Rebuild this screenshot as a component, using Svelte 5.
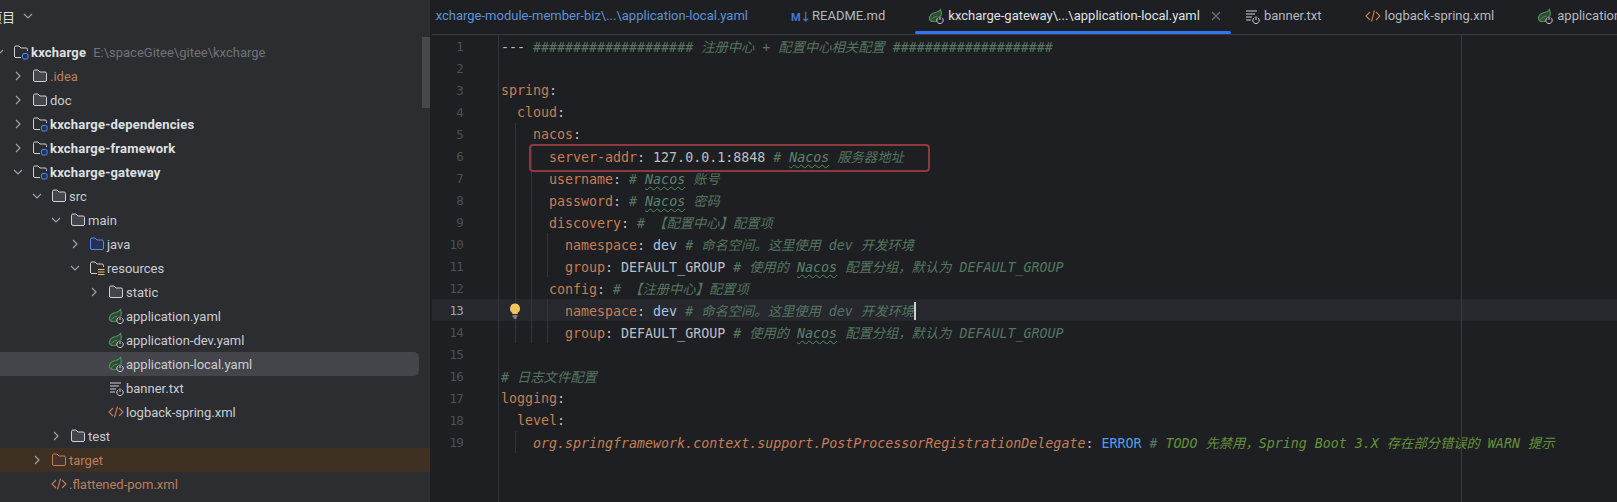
<script lang="ts">
	const tree = [
		{ d: 0, chev: 'down', icon: 'module', name: 'kxcharge', bold: true, path: 'E:\\spaceGitee\\gitee\\kxcharge' },
		{ d: 1, chev: 'right', icon: 'folder', name: '.idea', cls: 'orange' },
		{ d: 1, chev: 'right', icon: 'folder', name: 'doc' },
		{ d: 1, chev: 'right', icon: 'module', name: 'kxcharge-dependencies', bold: true },
		{ d: 1, chev: 'right', icon: 'module', name: 'kxcharge-framework', bold: true },
		{ d: 1, chev: 'down', icon: 'module', name: 'kxcharge-gateway', bold: true },
		{ d: 2, chev: 'down', icon: 'folder', name: 'src' },
		{ d: 3, chev: 'down', icon: 'folder', name: 'main' },
		{ d: 4, chev: 'right', icon: 'java', name: 'java' },
		{ d: 4, chev: 'down', icon: 'resources', name: 'resources' },
		{ d: 5, chev: 'right', icon: 'folder', name: 'static' },
		{ d: 5, icon: 'spring', name: 'application.yaml' },
		{ d: 5, icon: 'spring', name: 'application-dev.yaml' },
		{ d: 5, icon: 'spring', name: 'application-local.yaml', selected: true },
		{ d: 5, icon: 'banner', name: 'banner.txt' },
		{ d: 5, icon: 'xml', name: 'logback-spring.xml' },
		{ d: 3, chev: 'right', icon: 'folder', name: 'test' },
		{ d: 2, chev: 'right', icon: 'target', name: 'target', cls: 'orange', excluded: true },
		{ d: 2, icon: 'xml', name: '.flattened-pom.xml', cls: 'orange' }
	];

	const tabs = [
		{ name: 'kxcharge-module-member-biz\\...\\application-local.yaml', cls: 'clipped changed' },
		{ name: 'README.md', icon: 'md' },
		{ name: 'kxcharge-gateway\\...\\application-local.yaml', icon: 'spring', active: true },
		{ name: 'banner.txt', icon: 'banner' },
		{ name: 'logback-spring.xml', icon: 'xml' },
		{ name: 'application.yaml', icon: 'spring' }
	];

	// [class, text] tokens, one array per line
	const nacos = ['w', 'Nacos'];
	const lines = [
		[['v', '--- '], ['c', '#################### 注册中心 + 配置中心相关配置 ####################']],
		[],
		[['k', 'spring'], ['v', ':']],
		[['k', '  cloud'], ['v', ':']],
		[['k', '    nacos'], ['v', ':']],
		[['k', '      server-addr'], ['v', ': 127.0.0.1:8848 '], ['c', '# '], nacos, ['c', ' 服务器地址']],
		[['k', '      username'], ['v', ': '], ['c', '# '], nacos, ['c', ' 账号']],
		[['k', '      password'], ['v', ': '], ['c', '# '], nacos, ['c', ' 密码']],
		[['k', '      discovery'], ['v', ': '], ['c', '# 【配置中心】配置项']],
		[['k', '        namespace'], ['v', ': '], ['b', 'dev '], ['c', '# 命名空间。这里使用 dev 开发环境']],
		[['k', '        group'], ['v', ': DEFAULT_GROUP '], ['c', '# 使用的 '], nacos, ['c', ' 配置分组\uFF0C默认为 DEFAULT_GROUP']],
		[['k', '      config'], ['v', ': '], ['c', '# 【注册中心】配置项']],
		[['k', '        namespace'], ['v', ': '], ['b', 'dev '], ['c', '# 命名空间。这里使用 dev 开发环境'], ['caret', '']],
		[['k', '        group'], ['v', ': DEFAULT_GROUP '], ['c', '# 使用的 '], nacos, ['c', ' 配置分组\uFF0C默认为 DEFAULT_GROUP']],
		[],
		[['c', '# 日志文件配置']],
		[['k', 'logging'], ['v', ':']],
		[['k', '  level'], ['v', ':']],
		[['ki', '    org.springframework.context.support.PostProcessorRegistrationDelegate'], ['v', ': '], ['e', 'ERROR '], ['c', '# '], ['t', 'TODO 先禁用\uFF0CSpring Boot 3.X 存在部分错误的 WARN 提示']]
	];

	// indent guides: column, first line, last line (0-based)
	const guides = [
		[1, 4, 13],
		[2, 5, 13],
		[3, 9, 10],
		[3, 12, 13],
		[1, 18, 18]
	];
</script>

{#snippet power()}
	<path d="M10.200 9.700a3.200 3.200 0 1 0 3.600 0" fill="none" stroke="#ced0d6" stroke-width="1" />
	<path d="M12 8.400v3.600" stroke="#ced0d6" stroke-width="1" fill="none" />
{/snippet}

{#snippet icon(name)}
	<svg class="icon" width="16" height="16" viewBox="0 0 16 16" aria-hidden="true">
		{#if name === 'folder' || name === 'java' || name === 'target'}
			<path
				d="M1.500 3.500a1.500 1.500 0 0 1 1.500-1.500h3l2 2h5a1.500 1.500 0 0 1 1.500 1.500v6.500a1.500 1.500 0 0 1-1.500 1.500h-10a1.500 1.500 0 0 1-1.500-1.500z"
				fill={name === 'java' ? '#25324d' : name === 'target' ? '#45322b' : '#43454a'}
				stroke={name === 'java' ? '#548af7' : name === 'target' ? '#c77d55' : '#ced0d6'}
			/>
		{:else if name === 'module' || name === 'resources'}
			<path
				d="M8 13.500h-5a1.500 1.500 0 0 1-1.500-1.500v-8.500a1.500 1.500 0 0 1 1.500-1.500h3l2 2h5a1.500 1.500 0 0 1 1.500 1.500v1.500"
				fill="none"
				stroke="#ced0d6"
			/>
			{#if name === 'module'}
				<rect x="9.500" y="9.500" width="5.500" height="5.500" rx="1.500" fill="#25324d" stroke="#548af7" />
			{:else}
				<path d="M9 9.500h6.500M9 12h6.500M9 14.500h6.500" stroke="#f2c55c" stroke-width="1.200" />
			{/if}
		{:else if name === 'spring'}
			<path
				d="M8.500 13.500h-3.500c-2 0-3-1-3.500-2.500-.5-3.500 2.500-6 6-6.500 2-.3 3.800-1.200 5-3 .8 2 1 4 .5 6.500"
				fill="#2f4a35"
				stroke="#4f8f5a"
				stroke-width="1.200"
			/>
			<path d="M3.500 11.500c1.500-2 3.500-3 6-3.500" fill="none" stroke="#4f8f5a" stroke-width="1" />
			{@render power()}
		{:else if name === 'banner'}
			<path d="M2 3h11M2 6h9M2 9h6M2 12h5" stroke="#ced0d6" fill="none" />
			{@render power()}
		{:else if name === 'xml'}
			<path d="M5 4l-4 4 4 4M11 4l4 4-4 4M9.500 2.500l-3 11" fill="none" stroke="#c77d55" stroke-width="1.100" />
		{/if}
	</svg>
{/snippet}

{#snippet chevron(dir)}
	<svg class="chev" width="12" height="12" viewBox="0 0 12 12" aria-hidden="true">
		<path d={dir === 'down' ? 'M2 4l4 4 4-4' : 'M4 2l4 4-4 4'} fill="none" stroke="#9da0a8" stroke-width="1.200" />
	</svg>
{/snippet}

<div class="ide">
	<aside class="project">
		<header class="project-head">
			<span class="project-title">项目</span>
			{@render chevron('down')}
		</header>
		<div class="tree">
			{#each tree as row}
				<div class="row" class:selected={row.selected} class:excluded={row.excluded}>
					<div class="row-inner" style="margin-left: {19 * row.d - 7}px">
						<span class="chev-slot">
							{#if row.chev}{@render chevron(row.chev)}{/if}
						</span>
						{@render icon(row.icon)}
						<span class="label {row.cls ?? ''}" class:bold={row.bold}>{row.name}</span>
						{#if row.path}<span class="path">{row.path}</span>{/if}
					</div>
				</div>
			{/each}
		</div>
		<div class="scrollbar"></div>
	</aside>

	<main class="editor">
		<nav class="tabs">
			{#each tabs as tab}
				<div class="tab {tab.cls ?? ''}" class:active={tab.active}>
					{#if tab.icon === 'md'}
						<span class="md-icon">M↓</span>
					{:else if tab.icon}
						{@render icon(tab.icon)}
					{/if}
					<span class="tab-name">{tab.name}</span>
					{#if tab.active}
						<svg class="close" width="12" height="12" viewBox="0 0 12 12" aria-hidden="true">
							<path d="M2 2l8 8M10 2l-8 8" stroke="#6f737a" stroke-width="1.100" />
						</svg>
					{/if}
				</div>
			{/each}
		</nav>

		<div class="code-area">
			<div class="gutter-line"></div>
			<div class="margin-line"></div>
			{#each lines as line, i}
				<div class="line" class:current={i === 12}>
					<span class="num">{i + 1}</span>
					<span class="bulb-slot"></span>
					<code class="text">{#each line as [cls, str]}{#if cls === 'caret'}<span class="caret"></span>{:else}<span class={cls}>{str}</span>{/if}{/each}</code>
				</div>
			{/each}
			{#each guides as [col, from, to]}
				<div
					class="guide"
					style="left: {col * 16 + 67}px; top: {from * 22}px; height: {(to - from + 1) * 22}px"
				></div>
			{/each}
			<svg class="bulb" width="16" height="16" viewBox="0 0 16 16" aria-hidden="true">
				<path d="M8 .5a5 5 0 0 0-3 9l.5 1.500h5l.5-1.500a5 5 0 0 0-3-9z" fill="#f2c55c" />
				<path d="M5.500 13h5M6.500 15h3" stroke="#ced0d6" stroke-width="1" />
			</svg>
			<div class="highlight"></div>
		</div>
	</main>
</div>

<style>
	:global(body) {
		margin: 0;
		background: #1e1f22;
	}

	.ide {
		display: flex;
		width: 1617px;
		height: 502px;
		overflow: hidden;
		font-family: Roboto, "Noto Sans CJK SC", sans-serif;
		font-size: 13px;
	}

	.project {
		position: relative;
		flex: 0 0 430px;
		background: #2b2d30;
		color: #c9ccd3;
		overflow: hidden;
	}

	.project-head {
		display: flex;
		align-items: center;
		gap: 7px;
		height: 32px;
		margin-left: -11px;
		padding-bottom: 8px;
		color: #dfe1e5;
	}

	.row {
		height: 24px;
		display: flex;
		align-items: center;
		white-space: nowrap;
	}

	.row-inner {
		display: flex;
		align-items: center;
	}

	.row.selected {
		width: 419px;
		background: #43454a;
		border-radius: 0 5px 5px 0;
	}

	.row.excluded {
		background: #3f3024;
	}

	.chev-slot {
		flex: 0 0 12px;
		height: 12px;
		margin-right: 8px;
	}

	.chev {
		display: block;
	}

	.icon {
		flex: none;
	}

	.label {
		margin-left: 2px;
	}

	.bold {
		font-weight: 700;
		letter-spacing: 0.2px;
		color: #dfe1e5;
	}

	.orange {
		color: #bd7e59;
	}

	.path {
		margin-left: 7px;
		color: #6f737a;
	}

	.scrollbar {
		position: absolute;
		top: 37px;
		right: 0;
		width: 8px;
		height: 71px;
		background: #46484c;
	}

	.editor {
		flex: 1;
		min-width: 0;
		margin-left: 2px;
		background: #1e1f22;
	}

	.tabs {
		display: flex;
		height: 34px;
		border-bottom: 1px solid #393b40;
		overflow: hidden;
		color: #b4b8bf;
	}

	.tab {
		position: relative;
		flex: none;
		display: flex;
		align-items: center;
		gap: 4px;
		padding: 0 30px 3px 13px;
		white-space: nowrap;
	}

	.tab.clipped {
		width: 343px;
		margin-left: 3px;
		box-sizing: border-box;
		justify-content: flex-end;
		padding-left: 0;
		overflow: hidden;
	}

	.tab.changed {
		color: #5b93d6;
	}

	.tab.active {
		color: #dfe1e5;
		padding-right: 9px;
	}

	.tab.active::after {
		content: "";
		position: absolute;
		left: 0;
		right: 0;
		bottom: 0;
		height: 3px;
		border-radius: 2px;
		background: #3574f0;
	}

	.close {
		margin-left: 6px;
	}

	.md-icon {
		width: 17px;
		font-size: 11px;
		font-weight: 700;
		letter-spacing: -0.5px;
		color: #4a78c8;
	}

	.code-area {
		position: relative;
		height: 467px;
		overflow: hidden;
		color: #bcbec4;
	}

	.gutter-line {
		position: absolute;
		top: 0;
		bottom: 0;
		left: 66px;
		width: 1px;
		background: #313438;
	}

	.margin-line {
		position: absolute;
		top: 0;
		bottom: 0;
		left: 1029px;
		width: 1px;
		background: #393b40;
	}

	.line {
		display: flex;
		align-items: center;
		height: 22px;
		white-space: pre;
	}

	.line.current {
		background: #26282e;
	}

	.num {
		flex: 0 0 31px;
		text-align: right;
		font-family: "DejaVu Sans Mono", monospace;
		font-size: 12.5px;
		letter-spacing: -0.8px;
		color: #4b5059;
	}

	.current .num {
		color: #a1a3ab;
	}

	.bulb-slot {
		flex: 0 0 38px;
	}

	.bulb {
		position: absolute;
		left: 75px;
		top: 268px;
	}

	.text {
		font-family: "DejaVu Sans Mono", "Noto Sans CJK SC", monospace;
		font-size: 13.3px;
	}

	.k { color: #c77d55; }
	.ki { color: #c77d55; font-style: italic; }
	.v { color: #bcbec4; }
	.b { color: #a9c4e4; }
	.e { color: #4f9de8; }
	.c { color: #557560; font-style: italic; }
	.t { color: #64913a; font-style: italic; }

	.w {
		color: #5f826b;
		font-style: italic;
		text-decoration: underline wavy #4f8f5a 1px;
		text-underline-offset: 2px;
	}

	.caret {
		display: inline-block;
		width: 2px;
		height: 18px;
		margin-bottom: -4px;
		background: #ced0d6;
	}

	.guide {
		position: absolute;
		width: 1px;
		background: #313438;
	}

	/* red annotation drawn over the screenshot */
	.highlight {
		position: absolute;
		left: 97px;
		top: 109px;
		width: 397px;
		height: 24px;
		border: 2px solid #8c3a40;
		border-radius: 4px;
	}
</style>
